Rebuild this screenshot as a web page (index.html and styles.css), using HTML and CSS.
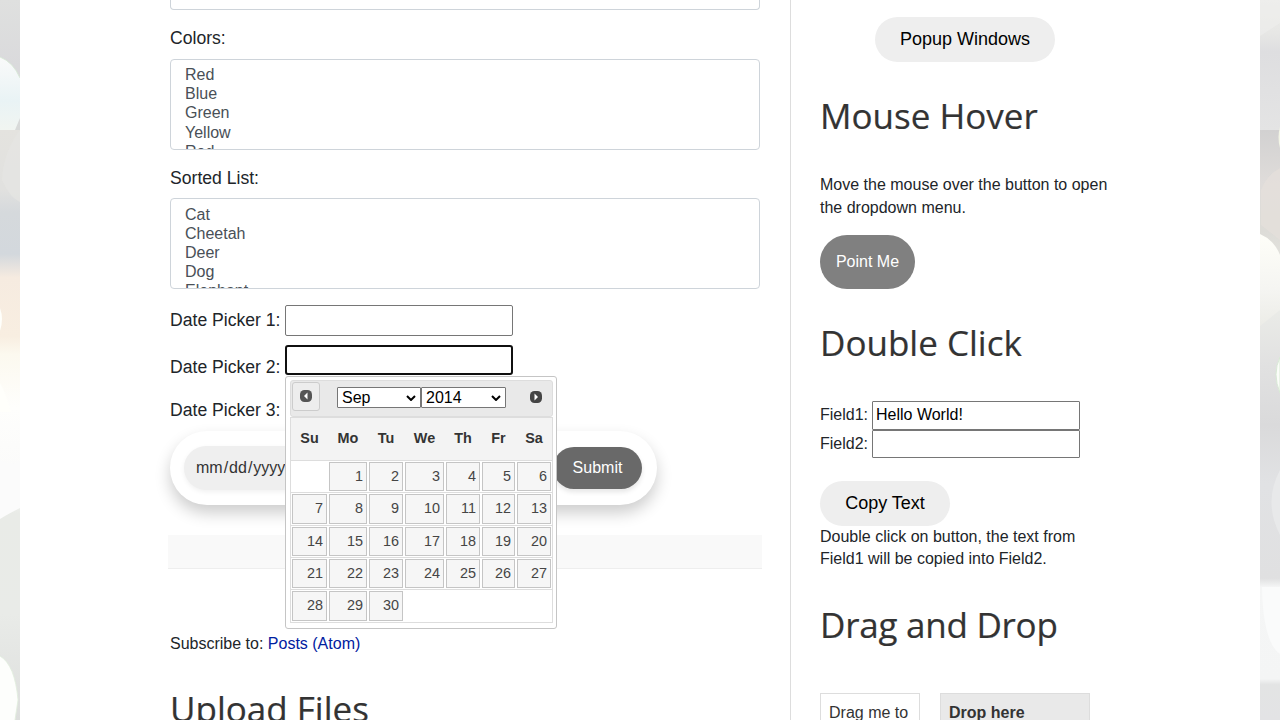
FILE: index.html
```html
<!DOCTYPE html>
<html lang="en">
<head>
<meta charset="utf-8">
<title>Automation Testing Practice</title>
<link rel="stylesheet" href="styles.css">
</head>
<body>
<div class="page">
  <svg class="strip" viewBox="0 0 20 720" preserveAspectRatio="none">
    <defs>
      <linearGradient id="la" x1="0" y1="0" x2="0" y2="1"><stop offset="0" stop-color="#dfe0df"/><stop offset=".5" stop-color="#dadadc"/><stop offset="1" stop-color="#d8dad9"/></linearGradient>
      <linearGradient id="lb" x1="0" y1="0" x2="0" y2="1">
        <stop offset="0" stop-color="#e4e3df"/><stop offset=".1" stop-color="#e1e1df"/><stop offset=".14" stop-color="#d5d9dc"/><stop offset=".21" stop-color="#d3d8dd"/><stop offset=".25" stop-color="#f6ebe0"/><stop offset=".35" stop-color="#f8eee1"/><stop offset=".38" stop-color="#fcf9ef"/><stop offset=".47" stop-color="#fefefc"/><stop offset=".6" stop-color="#fafafa"/><stop offset=".65" stop-color="#e9ebe7"/><stop offset=".82" stop-color="#e9ebe8"/><stop offset="1" stop-color="#dddfdd"/>
      </linearGradient>
      <linearGradient id="lc" x1="0" y1="0" x2="0" y2="1"><stop offset="0" stop-color="#fafafa"/><stop offset=".6" stop-color="#e9f3f5"/><stop offset="1" stop-color="#f1f5f1"/></linearGradient>
    </defs>
    <rect width="20" height="130" fill="url(#la)"/>
    <path d="M0 57Q13 62 20 78V118L15 130H0Z" fill="url(#lc)"/>
    <path d="M0 57Q13 62 20 78" fill="none" stroke="#d5ead4" stroke-width=".8"/>
    <rect y="130" width="20" height="590" fill="url(#lb)"/>
    <path d="M20 130Q3 153 2 180Q10 198 20 202Z" fill="#e6e5e2" opacity=".7"/>
    <path d="M0 308Q4 319 0 331ZM0 383Q7 395 11 412H0Z" fill="#fffffb"/>
    <path d="M0 460Q10 466 20 462V508Q8 514 0 519Z" fill="#fbfbfb"/>
    <path d="M0 656Q15 665 18 700L15 720H0Z" fill="#fdfefc"/>
    <path d="M0 656Q15 665 18 700L15 720" fill="none" stroke="#e1efdd" stroke-width=".8"/>
  </svg>
  <div class="content">
    <main class="main">
      <div class="cut-input"></div>
      <label class="label">Colors:</label>
      <div class="listbox"><div>Red</div><div>Blue</div><div>Green</div><div>Yellow</div><div>Red</div></div>
      <label class="label">Sorted List:</label>
      <div class="listbox sorted"><div>Cat</div><div>Cheetah</div><div>Deer</div><div>Dog</div><div>Elephant</div></div>
      <div class="picker one"><span>Date Picker 1:</span><input class="date-input" type="text"></div>
      <div class="picker two"><span>Date Picker 2:</span>
        <div class="anchor">
          <div class="date-input active"></div>
          <section class="calendar">
            <header class="cal-head">
              <span class="nav prev"><svg width="14" height="14" viewBox="0 0 14 14"><rect x="1" y="1" width="12" height="12" rx="4.5" fill="#555"/><path d="M8.5 3.5v7L5 7z" fill="#fff"/></svg></span>
              <span class="sel">Sep<svg width="10" height="6" viewBox="0 0 10 6"><path d="M1 1l4 4 4-4" fill="none" stroke="#000" stroke-width="2"/></svg></span>
              <span class="sel">2014<svg width="10" height="6" viewBox="0 0 10 6"><path d="M1 1l4 4 4-4" fill="none" stroke="#000" stroke-width="2"/></svg></span>
              <span class="nav next"><svg width="14" height="14" viewBox="0 0 14 14"><rect x="1" y="1" width="12" height="12" rx="4.5" fill="#444"/><path d="M5.5 3.5v7L9 7z" fill="#fff"/></svg></span>
            </header>
            <div class="cal-body">
              <div class="week days"><b>Su</b><b>Mo</b><b>Tu</b><b>We</b><b>Th</b><b>Fr</b><b>Sa</b></div>
              <div class="week"><i></i><a>1</a><a>2</a><a>3</a><a>4</a><a>5</a><a>6</a></div>
              <div class="week"><a>7</a><a>8</a><a>9</a><a>10</a><a>11</a><a>12</a><a>13</a></div>
              <div class="week"><a>14</a><a>15</a><a>16</a><a>17</a><a>18</a><a>19</a><a>20</a></div>
              <div class="week"><a>21</a><a>22</a><a>23</a><a>24</a><a>25</a><a>26</a><a>27</a></div>
              <div class="week last"><a>28</a><a>29</a><a>30</a></div>
            </div>
          </section>
        </div>
      </div>
      <div class="picker three"><span>Date Picker 3:</span></div>
      <div class="range"><span class="range-input">mm<s>/</s>dd<s>/</s>yyyy</span><span class="submit">Submit</span></div>
      <div class="pager"></div>
      <p class="subscribe">Subscribe to: <a href="#">Posts (Atom)</a></p>
      <h2 class="title upload">Upload Files</h2>
    </main>
    <aside class="side">
      <button class="pill popup">Popup Windows</button>
      <h2 class="title hover">Mouse Hover</h2>
      <p class="text">Move the mouse over the button to open<br>the dropdown menu.</p>
      <button class="point">Point Me</button>
      <h2 class="title double">Double Click</h2>
      <div class="field"><span>Field1:</span><input type="text" value="Hello World!"></div>
      <div class="field second"><span>Field2:</span><input type="text"></div>
      <button class="pill copy">Copy Text</button>
      <p class="text">Double click on button, the text from<br>Field1 will be copied into Field2.</p>
      <h2 class="title drag">Drag and Drop</h2>
      <div class="boxes"><div class="box from">Drag me to</div><div class="box drop">Drop here</div></div>
    </aside>
  </div>
  <svg class="strip" viewBox="0 0 20 720" preserveAspectRatio="none">
    <defs>
      <linearGradient id="ra" x1="0" y1="0" x2="0" y2="1"><stop offset="0" stop-color="#ededea"/><stop offset=".25" stop-color="#e7e7e5"/><stop offset=".4" stop-color="#dedee0"/><stop offset="1" stop-color="#e4e4e4"/></linearGradient>
      <linearGradient id="rb" x1="0" y1="0" x2="0" y2="1">
        <stop offset="0" stop-color="#d2d1d1"/><stop offset=".09" stop-color="#dfdcda"/><stop offset=".17" stop-color="#dddcd7"/><stop offset=".3" stop-color="#ebece8"/><stop offset=".4" stop-color="#e1e1e1"/><stop offset=".5" stop-color="#dadadb"/><stop offset=".6" stop-color="#e1e2e4"/><stop offset=".76" stop-color="#e0e0e1"/><stop offset=".775" stop-color="#f5f6f6"/><stop offset=".93" stop-color="#f4f5f5"/><stop offset=".94" stop-color="#e3e4e4"/><stop offset="1" stop-color="#e3e3e5"/>
      </linearGradient>
      <linearGradient id="rc" x1="0" y1="0" x2="0" y2="1"><stop offset="0" stop-color="#fefef8"/><stop offset=".6" stop-color="#f5f5f2"/><stop offset="1" stop-color="#ecece7"/></linearGradient>
    </defs>
    <rect width="20" height="130" fill="url(#ra)"/>
    <path d="M0 0H20V23L0 36Z" fill="#efefec" opacity=".6"/>
    <rect y="130" width="20" height="590" fill="url(#rb)"/>
    <path d="M20 127Q17 137 20 148Z" fill="#f3f5e6"/>
    <path d="M20 168Q6 176 1 190V225L20 240Z" fill="#e5dfdc" opacity=".7"/>
    <path d="M0 234Q14 240 20 255V310L0 326Z" fill="url(#rc)"/>
    <path d="M20 357Q12 374 20 393Z" fill="#fbfdf9" stroke="#d8e9d5"/>
    <path d="M20 470Q3 502 20 535Z" fill="#e8e9ea"/>
    <path d="M2 587H20V654Q3 642 2 587Z" fill="#fafbfb"/>
  </svg>
</div>
</body>
</html>
```

FILE: styles.css
```css
* { box-sizing: border-box; }
body { margin: 0; height: 720px; overflow: hidden; font-family: "Liberation Sans", Arial, sans-serif; font-size: 16px; color: #212529; }
p, h2 { margin: 0; }
button, input { font-family: inherit; margin: 0; }
.page { display: grid; grid-template-columns: 20px 1240px 20px; height: 720px; overflow: hidden; }
.strip { display: block; width: 20px; height: 720px; }
.content { display: grid; grid-template-columns: 770px 470px; height: 720px; overflow: hidden; background: #fff; }
.main { padding: 0 30px 0 150px; }
.side { border-left: 1px solid #ddd; padding: 17px 0 0 29px; }

.cut-input { height: 10px; border: 1px solid #ced4da; border-top: 0; border-radius: 0 0 4px 4px; }
.label { display: block; font-size: 17.6px; line-height: 27px; padding: 15px 0 7px; }
.listbox { height: 91px; border: 1px solid #ced4da; border-radius: 4px; padding: 5px 14px; overflow: hidden; color: #495057; line-height: 19.2px; }
.sorted { margin-top: -1px; padding-top: 5.6px; }
.picker { display: flex; font-size: 17.6px; line-height: 27px; }
.picker > span { width: 115px; white-space: nowrap; }
.one { margin-top: 16px; height: 31px; align-items: center; }
.two { margin-top: 9px; height: 30px; }
.two > span { padding-top: 9px; }
.three { margin-top: 22px; height: 34px; }
.date-input { width: 228px; height: 31px; border: 1px solid #767676; border-radius: 2px; padding: 0; background: #fff; }
.date-input.active { height: 30px; border: 2px solid #101010; border-radius: 3px; }
.anchor { position: relative; }

.calendar { position: absolute; z-index: 5; top: 31px; left: 0; width: 272px; height: 253px; padding: 3px; border: 1px solid #c5c5c5; border-radius: 3px; background: #fff; color: #333; }
.cal-head { display: flex; margin-left: 1px; width: 263px; height: 37px; padding: 1px; background: #e9e9e9; border: 1px solid #ddd; border-radius: 3px; }
.nav { display: flex; justify-content: center; align-items: center; width: 28px; height: 29px; border-radius: 3px; }
.prev { border: 1px solid #ccc; background: #ededed; margin-right: 17px; padding-bottom: 1px; }
.next { margin-left: 16px; }
.nav svg { display: block; }
.sel { display: flex; align-items: center; justify-content: space-between; width: 84px; height: 21px; margin-top: 5px; padding: 0 4px; border: 1px solid #767676; background: #fff; color: #000; font-size: 16px; line-height: 19px; border-radius: 1px; }
.sel + .sel { width: 85px; }
.cal-body { margin-left: 1px; width: 263px; border: 1px solid #ddd; border-top: 0; }
.week { display: grid; grid-template-columns: 37px 40px 36px 41px 36px 35px 36px; height: 32.25px; padding-top: 1px; border-top: 1px solid #ddd; }
.week a { margin: 0 1px 1px; border: 1px solid #c5c5c5; background: #f6f6f6; color: #454545; text-align: right; padding-right: 3px; font-size: 14.4px; line-height: 27px; }
.days { height: 43px; padding-bottom: 1px; background: #f3f3f3; align-items: center; }
.days b { text-align: center; font-size: 14.4px; line-height: 20px; padding-bottom: 2px; }
.last { height: 33px; }

.range { display: flex; align-items: center; justify-content: space-between; width: 487px; height: 74px; padding: 0 15px 0 14px; border-radius: 37px; background: #fff; box-shadow: 0 8px 16px rgba(0,0,0,.2); }
.range-input { width: 170px; height: 44px; border-radius: 22px; background: #efefef; color: #333; padding-left: 12px; line-height: 43px; box-shadow: 0 2px 5px rgba(0,0,0,.06); }
.range-input s { text-decoration: none; padding: 0 1px; }
.submit { width: 89px; height: 42px; border-radius: 21px; background: #696969; color: #fff; text-align: center; line-height: 42px; box-shadow: 0 3px 5px rgba(0,0,0,.1); }
.pager { margin: 30px -2px 0; height: 34px; background: #f9f9f9; border-bottom: 1px solid #eee; }
.subscribe { margin-top: 63px; line-height: 24px; }
.subscribe a { color: #00209f; text-decoration: none; }
.title { font-family: "Open Sans", sans-serif; font-weight: 400; font-size: 35px; line-height: 50px; color: #333; -webkit-text-stroke: .2px #333; }
.upload { margin-top: 28px; }

.pill { display: block; height: 45px; border: 0; border-radius: 23px; background: #eee; color: #000; font-size: 18px; padding: 0; }
.popup { width: 180px; margin-left: 55px; }
.hover { margin-top: 29px; }
.text { line-height: 22.4px; }
.hover + .text { margin-top: 32px; line-height: 23px; }
.point { display: block; width: 95px; height: 54px; margin-top: 16px; border: 0; border-radius: 27px; padding: 0; background: gray; color: #fff; font-size: 16px; }
.double { margin-top: 29px; }
.field { display: flex; align-items: center; height: 29px; }
.double + .field { margin-top: 33px; }
.field span { width: 52px; padding-bottom: 1px; }
.field input { width: 208px; height: 29px; border: 1px solid #767676; border-radius: 1px; padding: 0 3px 1px; font-size: 16px; color: #000; }
.second span { padding-bottom: 0; }
.second, .second input { height: 28px; }
.copy { width: 130px; margin-top: 23px; }
.drag { margin-top: 29px; letter-spacing: -.25px; }
.boxes { display: flex; gap: 20px; margin-top: 43px; align-items: flex-start; }
.box { height: 90px; border: 1px solid #ddd; padding: 8px; line-height: 22px; color: #333; }
.from { width: 100px; }
.drop { width: 150px; background: #e9e9e9; font-weight: bold; }
```
